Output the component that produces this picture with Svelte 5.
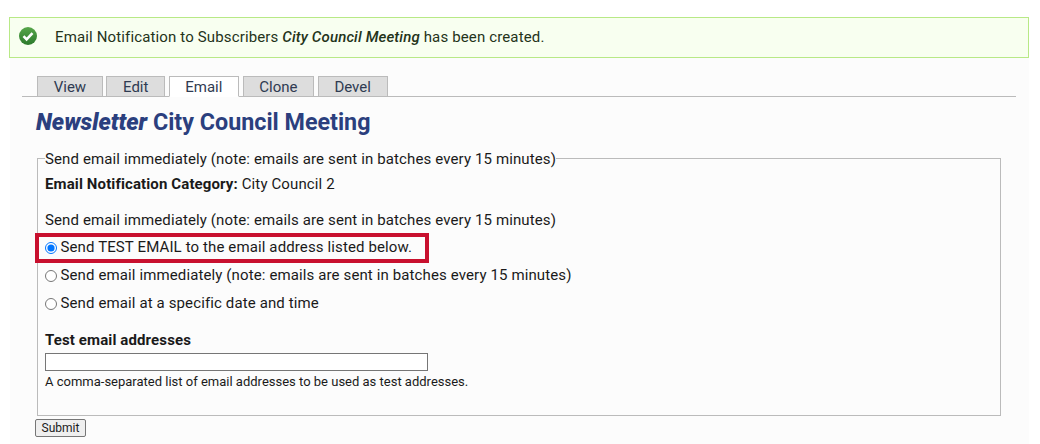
<script>
	const tabs = ['View', 'Edit', 'Email', 'Clone', 'Devel'];
	const active = 'Email';
	const note = 'Send email immediately (note: emails are sent in batches every 15 minutes)';
</script>

<div class="page">
	<div class="message">
		<svg class="check" width="20" height="20" viewBox="0 0 20 20" aria-hidden="true">
			<defs>
				<linearGradient id="ok" x1="0" y1="0" x2="0" y2="1">
					<stop offset="0" stop-color="#57a64a" />
					<stop offset="1" stop-color="#2c7a2c" />
				</linearGradient>
			</defs>
			<circle cx="10" cy="10" r="9" fill="url(#ok)" />
			<path d="M5.5 10.2l3.1 3.1 5.9-6.2" fill="none" stroke="#fff" stroke-width="2.6" />
		</svg>
		<span>Email Notification to Subscribers <em>City Council Meeting</em> has been created.</span>
	</div>

	<div class="main">
		<ul class="tabs">
			{#each tabs as tab}
				<li class:active={tab === active}>{tab}</li>
			{/each}
		</ul>

		<h1><em>Newsletter</em> City Council Meeting</h1>

		<form onsubmit={(e) => e.preventDefault()}>
			<fieldset>
				<legend>{note}</legend>
				<p class="category"><strong>Email Notification Category:</strong> City Council 2</p>
				<p class="note">{note}</p>

				<div class="options">
					<label class="highlight"><input type="radio" name="send" checked />Send TEST EMAIL to the email address listed below.</label>
					<label><input type="radio" name="send" />{note}</label>
					<label><input type="radio" name="send" />Send email at a specific date and time</label>
				</div>

				<label class="field-label" for="test-addresses">Test email addresses</label>
				<input id="test-addresses" class="text" type="text" />
				<p class="help">A comma-separated list of email addresses to be used as test addresses.</p>
			</fieldset>
			<button type="submit">Submit</button>
		</form>
	</div>
</div>

<style>
	:global(body) {
		background: #fff;
		font-family: Roboto, 'Liberation Sans', sans-serif;
		color: #1a1a1a;
	}

	.page {
		height: 444px;
		padding: 17px 11px 0 9px;
		box-sizing: border-box;
		overflow: hidden;
	}

	.message {
		display: flex;
		align-items: center;
		height: 41px;
		box-sizing: border-box;
		padding: 0 0 1px 8px;
		border: 1px solid #b8e986;
		background: #f8fff0;
		font-size: 15px;
		letter-spacing: 0.14px;
		color: #24331a;
	}

	.message em {
		font-weight: 500;
	}

	.check {
		margin: 0 17px 2px 0;
	}

	.main {
		margin-left: 1px;
		height: 386px;
		padding: 18px 13px 0 12px;
		background: #fcfcfc;
	}

	.tabs {
		display: flex;
		gap: 3.5px;
		margin: 0;
		padding: 0 0 0 15px;
		list-style: none;
		border-bottom: 1px solid #bbb;
		height: 20px;
	}

	.tabs li {
		height: 21px;
		box-sizing: border-box;
		padding: 1px 15.7px 0;
		border: 1px solid #bbb;
		background: #ddd;
		font-size: 15px;
		line-height: 18px;
		color: #2f3b52;
	}

	.tabs li.active {
		background: #fff;
		border-bottom-color: #fff;
	}

	h1 {
		margin: 10px 0 0 14px;
		font-size: 23.3px;
		line-height: 30px;
		font-weight: 700;
		color: #2b3f7e;
	}

	h1 em {
		font-weight: 900;
	}

	fieldset {
		margin: 11px 15px 0 15px;
		padding: 0 7px;
		height: 268px;
		box-sizing: border-box;
		border: 1px solid #bbb;
		font-size: 15px;
		letter-spacing: 0.12px;
		min-width: 0;
	}

	legend {
		padding: 3px 0 0;
		line-height: 17px;
	}

	p {
		margin: 0;
	}

	.category {
		margin-top: 6px;
		line-height: 20px;
	}

	.note {
		margin-top: 16px;
		line-height: 20px;
	}

	.options {
		display: flex;
		flex-direction: column;
		gap: 8px;
		margin-top: 7px;
	}

	.options label {
		display: flex;
		align-items: center;
		height: 20px;
	}

	.options input {
		width: 12px;
		height: 12px;
		margin: 1px 3.5px 0 0;
		flex: none;
	}

	.options .highlight {
		box-sizing: border-box;
		width: 394px;
		height: 30px;
		margin: -4px 0 -6px -10px;
		padding: 0 0 2px 6px;
		border: 4px solid #c8102e;
	}

	.field-label {
		display: block;
		margin-top: 17px;
		font-weight: 700;
		line-height: 20px;
	}

	.text {
		display: block;
		width: 383px;
		height: 18px;
		box-sizing: border-box;
		margin: 3px 0 0;
		padding: 0 2px;
		border: 1px solid #767676;
		background: #fff;
	}

	.help {
		margin-top: 3px;
		font-size: 13px;
		line-height: 16px;
		letter-spacing: 0;
	}

	button {
		display: block;
		margin: 3px 0 0 13px;
		width: 51px;
		height: 18px;
		padding: 0;
		border: 1px solid #767676;
		border-radius: 2px;
		background: #efefef;
		font: 12px Roboto, 'Liberation Sans', sans-serif;
		color: #1a1a1a;
	}
</style>
